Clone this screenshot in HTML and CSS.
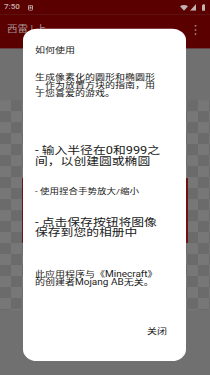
FILE: index.html
```html
<!DOCTYPE html>
<html lang="zh-CN">
<head>
<meta charset="utf-8">
<title>如何使用</title>
<link rel="stylesheet" href="styles.css">
</head>
<body>
<div class="screen">
  <div class="statusbar">
    <span class="time">7:50</span>
    <svg class="notif" width="5" height="7" viewBox="0 0 5 7"><rect x="0.5" y="0.5" width="4" height="6" rx="0.8" fill="none" stroke="currentColor" stroke-width="1"/><rect x="1.6" y="2" width="1.8" height="2.6" fill="currentColor"/></svg>
    <span class="spacer"></span>
    <svg class="wifi" width="8" height="8" viewBox="0 0 8 8"><path d="M4 8 L0 2.6 Q4 -0.6 8 2.6 Z" fill="currentColor"/></svg>
    <svg class="signal" width="6" height="8" viewBox="0 0 6 8"><path d="M0 8 L6 8 L6 0 Z" fill="currentColor"/></svg>
    <svg class="battery" width="3.4" height="8.4" viewBox="0 0 3.4 8.4"><rect x="1" y="0" width="1.4" height="1" fill="currentColor"/><rect x="0" y="0.9" width="3.4" height="7.5" rx="0.5" fill="currentColor"/></svg>
  </div>
  <div class="toolbar">
    <span class="app-title">西雷 | 上</span>
    <svg class="menu" width="3" height="13" viewBox="0 0 3 13"><circle cx="1.5" cy="1.5" r="1" fill="currentColor"/><circle cx="1.5" cy="6.5" r="1" fill="currentColor"/><circle cx="1.5" cy="11.5" r="1" fill="currentColor"/></svg>
  </div>
  <div class="main">
    <div class="canvas">
      <span class="edge edge-left"></span>
      <span class="edge edge-right"></span>
    </div>
  </div>
  <div class="dialog">
    <h2 class="dlg-title">如何使用</h2>
    <p class="dlg-body">生成像素化的圆形和椭圆形，作为放置方块的指南，用于您喜爱的游戏。</p>
    <p class="dlg-big">- 输入半径在0和999之间，以创建圆或椭圆</p>
    <p class="dlg-small">- 使用捏合手势放大/缩小</p>
    <p class="dlg-big dlg-big-2">- 点击保存按钮将图像保存到您的相册中</p>
    <p class="dlg-body dlg-note">此应用程序与《Minecraft》的创建者Mojang AB无关。</p>
    <div class="dlg-actions"><button class="dlg-btn" type="button">关闭</button></div>
  </div>
</div>
</body>
</html>
```

FILE: styles.css
```css
* {
  box-sizing: border-box;
  margin: 0;
  padding: 0;
}

html,
body {
  width: 210px;
  height: 375px;
  overflow: hidden;
  background: #6f6f6f;
}

body {
  font-family: Roboto, "Noto Sans CJK SC", sans-serif;
}

/* the reference is a phone capture squeezed vertically */
.screen {
  position: relative;
  width: 210px;
  height: 457px;
  display: flex;
  flex-direction: column;
  background: #707070;
  transform: scaleY(0.8206);
  transform-origin: 0 0;
}

.statusbar {
  height: 18px;
  flex: none;
  display: flex;
  align-items: center;
  padding: 0 5px 0 4px;
  background: #5b0000;
  color: #c2b2b2;
}

.time {
  font-size: 8px;
  font-weight: 500;
  line-height: 10px;
}

.notif {
  margin-left: 8px;
}

.spacer {
  flex: 1;
}

.wifi {
  margin-right: 2px;
}

.signal {
  margin-right: 5.6px;
}

.toolbar {
  height: 40.5px;
  flex: none;
  display: flex;
  align-items: center;
  padding: 0 13px 5px 7px;
  background: #5b0000;
  color: #a89494;
}

.app-title {
  flex: 1;
  font-size: 10.5px;
  line-height: 12px;
  white-space: nowrap;
}

.menu {
  margin-top: 1.6px;
}

.main {
  flex: 1;
  padding-top: 63.5px;
}

.canvas {
  position: relative;
  height: 256px;
  background: repeating-conic-gradient(#6b6b6b 0 25%, #777777 0 50%) 0 0 / 22px 26.8px;
}

.edge {
  position: absolute;
  top: 95px;
  width: 3px;
  height: 79px;
  background: #6e1212;
}

.edge-left {
  left: 21.5px;
}

.edge-right {
  left: 185px;
}

.dialog {
  position: absolute;
  left: 23px;
  top: 35.4px;
  width: 163px;
  height: 404.6px;
  padding: 20.2px 23px 0 12px;
  background: #ffffff;
  border-radius: 14px;
  color: #212121;
}

.dlg-title {
  font-size: 10px;
  font-weight: 400;
  line-height: 12px;
}

.dlg-body {
  margin-top: 21.2px;
  font-size: 10px;
  line-height: 10.3px;
  line-break: anywhere;
}

.dlg-big {
  margin-top: 58.2px;
  font-size: 12.8px;
  line-height: 12.8px;
  line-break: anywhere;
}

.dlg-small {
  margin-top: 24.8px;
  font-size: 9.5px;
  line-height: 10px;
  white-space: nowrap;
}

.dlg-big-2 {
  margin-top: 26.3px;
}

.dlg-note {
  margin-top: 38.7px;
  line-height: 10.3px;
}

.dlg-actions {
  display: flex;
  justify-content: flex-end;
  margin-top: 48.2px;
  margin-right: -4px;
}

.dlg-btn {
  border: 0;
  background: none;
  font-family: inherit;
  font-size: 10px;
  line-height: 12px;
  color: #212121;
}
```
